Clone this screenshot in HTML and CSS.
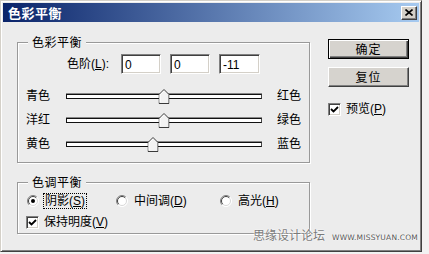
FILE: index.html
```html
<!DOCTYPE html>
<html lang="zh-CN">
<head>
<meta charset="utf-8">
<title>色彩平衡</title>
<link rel="stylesheet" href="styles.css">
</head>
<body>
<div class="window">
  <div class="titlebar">
    <span class="title">色彩平衡</span>
    <button class="close" aria-label="关闭">
      <svg width="8" height="7" viewBox="0 0 8 7"><path d="M0.5 0.5 L7.5 6.5 M7.5 0.5 L0.5 6.5" stroke="#000" stroke-width="1.6" fill="none"/></svg>
    </button>
  </div>
  <div class="body">
    <div class="main">
      <fieldset class="group group-color">
        <legend>色彩平衡</legend>
        <div class="levels">
          <span class="levels-label">色阶(<u>L</u>):</span>
          <span class="field">0</span>
          <span class="field">0</span>
          <span class="field field-wide">-11</span>
        </div>
        <div class="slider-row">
          <span class="lbl-left">青色</span>
          <div class="track"><span class="thumb" style="left:50%"><svg width="11" height="15" viewBox="0 0 11 15"><path d="M0.5 14.5 V5.5 L5.5 0.5 L10.5 5.5 V14.5 Z" fill="#f2f2f2" stroke="#3a3a3a"/><path d="M1.5 13.5 V5.9 L5.5 1.9" fill="none" stroke="#fff"/></svg></span></div>
          <span class="lbl-right">红色</span>
        </div>
        <div class="slider-row">
          <span class="lbl-left">洋红</span>
          <div class="track"><span class="thumb" style="left:50%"><svg width="11" height="15" viewBox="0 0 11 15"><path d="M0.5 14.5 V5.5 L5.5 0.5 L10.5 5.5 V14.5 Z" fill="#f2f2f2" stroke="#3a3a3a"/><path d="M1.5 13.5 V5.9 L5.5 1.9" fill="none" stroke="#fff"/></svg></span></div>
          <span class="lbl-right">绿色</span>
        </div>
        <div class="slider-row">
          <span class="lbl-left">黄色</span>
          <div class="track"><span class="thumb" style="left:44.5%"><svg width="11" height="15" viewBox="0 0 11 15"><path d="M0.5 14.5 V5.5 L5.5 0.5 L10.5 5.5 V14.5 Z" fill="#f2f2f2" stroke="#3a3a3a"/><path d="M1.5 13.5 V5.9 L5.5 1.9" fill="none" stroke="#fff"/></svg></span></div>
          <span class="lbl-right">蓝色</span>
        </div>
      </fieldset>
      <fieldset class="group group-tone">
        <legend>色调平衡</legend>
        <div class="radios">
          <label class="radio radio-1">
            <svg class="radio-icon" width="12" height="12" viewBox="0 0 12 12"><circle cx="6" cy="6" r="5.5" fill="#fff"/><path d="M2.1 9.9 A5.5 5.5 0 0 1 9.9 2.1" fill="none" stroke="#808080"/><path d="M2.8 9.2 A4.5 4.5 0 0 1 9.2 2.8" fill="none" stroke="#404040"/><path d="M9.9 2.1 A5.5 5.5 0 0 1 2.1 9.9" fill="none" stroke="#fff"/><path d="M9.2 2.8 A4.5 4.5 0 0 1 2.8 9.2" fill="none" stroke="#d8d8d8"/><circle cx="6" cy="6" r="2" fill="#000"/></svg>
            <span class="focus">阴影(<u>S</u>)</span>
          </label>
          <label class="radio radio-2">
            <svg class="radio-icon" width="12" height="12" viewBox="0 0 12 12"><circle cx="6" cy="6" r="5.5" fill="#fff"/><path d="M2.1 9.9 A5.5 5.5 0 0 1 9.9 2.1" fill="none" stroke="#808080"/><path d="M2.8 9.2 A4.5 4.5 0 0 1 9.2 2.8" fill="none" stroke="#404040"/><path d="M9.9 2.1 A5.5 5.5 0 0 1 2.1 9.9" fill="none" stroke="#fff"/><path d="M9.2 2.8 A4.5 4.5 0 0 1 2.8 9.2" fill="none" stroke="#d8d8d8"/></svg>
            <span>中间调(<u>D</u>)</span>
          </label>
          <label class="radio radio-3">
            <svg class="radio-icon" width="12" height="12" viewBox="0 0 12 12"><circle cx="6" cy="6" r="5.5" fill="#fff"/><path d="M2.1 9.9 A5.5 5.5 0 0 1 9.9 2.1" fill="none" stroke="#808080"/><path d="M2.8 9.2 A4.5 4.5 0 0 1 9.2 2.8" fill="none" stroke="#404040"/><path d="M9.9 2.1 A5.5 5.5 0 0 1 2.1 9.9" fill="none" stroke="#fff"/><path d="M9.2 2.8 A4.5 4.5 0 0 1 2.8 9.2" fill="none" stroke="#d8d8d8"/></svg>
            <span>高光(<u>H</u>)</span>
          </label>
        </div>
        <label class="check check-lum">
          <span class="box"><svg width="9" height="9" viewBox="0 0 9 9"><path d="M1 4 L3.5 6.5 L8 2" fill="none" stroke="#000" stroke-width="1.8"/></svg></span>
          <span>保持明度(<u>V</u>)</span>
        </label>
      </fieldset>
    </div>
    <div class="side">
      <button class="btn btn-default">确定</button>
      <button class="btn">复位</button>
      <label class="check check-preview">
        <span class="box"><svg width="9" height="9" viewBox="0 0 9 9"><path d="M1 4 L3.5 6.5 L8 2" fill="none" stroke="#000" stroke-width="1.8"/></svg></span>
        <span>预览(<u>P</u>)</span>
      </label>
    </div>
  </div>
  <div class="watermark"><span class="wm-cn">思缘设计论坛</span><span class="wm-url">WWW.MISSYUAN.COM</span></div>
</div>
</body>
</html>
```
FILE: styles.css
```css
html, body {
  margin: 0;
  padding: 0;
}
body {
  background: #f2f2f2;
  font-family: "Liberation Sans", "Noto Sans CJK SC", sans-serif;
  font-size: 12px;
  line-height: 14px;
  color: #000;
}
.window {
  position: relative;
  width: 422px;
  height: 252px;
  box-sizing: border-box;
  background: #ececec;
  border: 1px solid;
  border-color: #d4d0c8 #404040 #404040 #d4d0c8;
  box-shadow: inset 1px 1px #fff, inset -1px -1px #808080;
  padding: 2px;
}
.titlebar {
  height: 19px;
  display: flex;
  align-items: center;
  justify-content: space-between;
  background: linear-gradient(to right, #0a246a, #a6caf0);
  padding: 0 2px 0 5px;
}
.title {
  color: #fff;
  font-weight: bold;
  font-size: 13px;
  font-family: "Noto Sans CJK SC", sans-serif;
  letter-spacing: 0.5px;
}
.close {
  width: 16px;
  height: 14px;
  padding: 0;
  margin: 0;
  display: flex;
  align-items: center;
  justify-content: center;
  background: #d4d0c8;
  border: 1px solid;
  border-color: #fff #404040 #404040 #fff;
  box-shadow: inset -1px -1px #808080;
  box-sizing: border-box;
}
.body {
  display: flex;
  padding: 13px 0 0 14px;
}
.main {
  width: 293px;
}
.group {
  margin: 0;
  padding: 0;
  box-sizing: border-box;
  width: 293px;
  border: 1px solid #999;
  box-shadow: inset 1px 1px #fff, 1px 1px #fff;
}
.group legend {
  margin-left: 10px;
  padding: 0 4px;
  background: #ececec;
  font-family: "Noto Sans CJK SC", sans-serif;
  line-height: 14px;
  letter-spacing: 0.5px;
}
.group-color {
  padding-bottom: 6px;
}
.levels {
  display: flex;
  align-items: center;
  margin-top: 5px;
  padding-left: 49px;
  height: 20px;
}
.levels-label {
  width: 54px;
}
.field {
  width: 40px;
  height: 20px;
  box-sizing: border-box;
  margin-right: 9px;
  background: #fff;
  border: 1px solid;
  border-color: #808080 #fff #fff #808080;
  box-shadow: inset 1px 1px #404040, inset -1px -1px #d4d0c8;
  padding: 3px 0 0 3px;
  font-size: 12px;
  line-height: 14px;
}
.field-wide {
  width: 41px;
  margin-right: 0;
}
.slider-row {
  display: flex;
  align-items: center;
  height: 24px;
  padding-left: 8px;
}
.levels + .slider-row {
  margin-top: 10px;
}
.lbl-left {
  width: 40px;
}
.track {
  position: relative;
  width: 196px;
  height: 5px;
  box-sizing: border-box;
  background: #fff;
  border: 1px solid #111;
  border-right-color: #444;
  box-shadow: 0 -1px #888;
}
.thumb {
  position: absolute;
  top: -6px;
  width: 11px;
  height: 15px;
  transform: translateX(-50%);
  display: block;
}
.thumb svg {
  display: block;
}
.lbl-right {
  margin-left: 15px;
}
.group-tone {
  margin-top: 12px;
  padding-bottom: 3px;
}
.radios {
  display: flex;
  align-items: center;
  height: 16px;
  margin-top: 4px;
  padding-left: 9px;
}
.radio {
  display: flex;
  align-items: center;
}
.radio-1 {
  width: 89px;
}
.radio-2 {
  width: 104px;
}
.radio-icon {
  flex: none;
  margin-right: 5px;
}
.radio-2 .radio-icon,
.radio-3 .radio-icon {
  margin-right: 6px;
}
.focus {
  outline: 1px dotted #000;
  outline-offset: 0;
  padding: 0 1px;
}
.check {
  display: flex;
  align-items: center;
  height: 16px;
}
.check-lum {
  margin-top: 5px;
  padding-left: 8px;
}
.box {
  width: 13px;
  height: 13px;
  box-sizing: border-box;
  background: #fff;
  border: 1px solid;
  border-color: #808080 #fff #fff #808080;
  box-shadow: inset 1px 1px #404040, inset -1px -1px #d4d0c8;
  display: flex;
  align-items: center;
  justify-content: center;
  margin-right: 5px;
  flex: none;
}
.box svg {
  display: block;
}
.side {
  display: flex;
  flex-direction: column;
  margin-left: 18px;
  padding-top: 4px;
}
.btn {
  width: 81px;
  height: 20px;
  box-sizing: border-box;
  margin: 0;
  padding: 0;
  background: #d6d3ce;
  border: 1px solid;
  border-color: #fff #404040 #404040 #fff;
  box-shadow: inset -1px -1px #808080;
  font-family: "Noto Sans CJK SC", sans-serif;
  font-size: 12px;
  line-height: 14px;
  color: #000;
  letter-spacing: 1px;
}
.btn-default {
  border: 1px solid #000;
  box-shadow: inset 1px 1px #fff, inset -1px -1px #404040, inset -2px -2px #808080;
}
.btn + .btn {
  margin-top: 8px;
}
.check-preview {
  margin-top: 14px;
}
.watermark {
  position: absolute;
  right: 3px;
  bottom: 6px;
  display: flex;
  align-items: baseline;
  color: #7a7a7a;
  text-shadow: 0 0 2px #fff, 0 0 1px #fff;
}
.wm-cn {
  font-family: "Noto Sans CJK SC", sans-serif;
  font-size: 12px;
  line-height: 15px;
}
.wm-url {
  font-family: "DejaVu Sans", sans-serif;
  font-size: 7.5px;
  margin-left: 7px;
  letter-spacing: 0.2px;
  color: #555;
}
```
